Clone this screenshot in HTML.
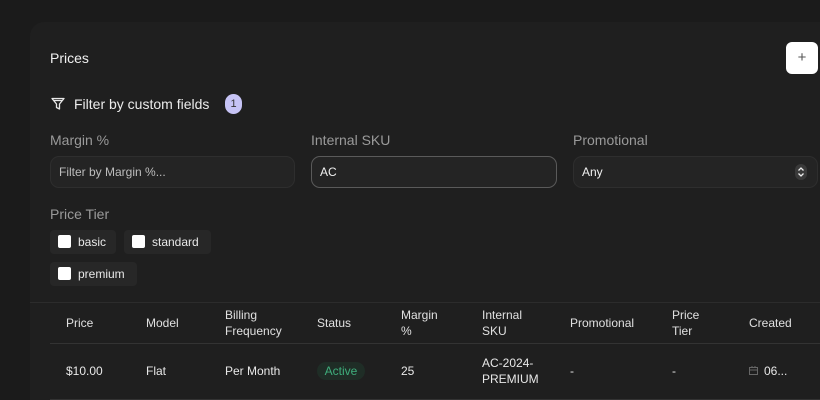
<!DOCTYPE html>
<html style="width:820px;height:400px;overflow:hidden"><head><meta charset="utf-8"><style>
*{box-sizing:border-box;margin:0;padding:0}
body{width:820px;height:400px;overflow:hidden;background:#1b1b1b;font-family:"Liberation Sans",sans-serif;color:#e8e8e8;position:relative}
.card{position:absolute;left:30px;top:22px;width:790px;height:378px;background:#1f1f1f;border-radius:14px 0 0 0}
.a{position:absolute;white-space:nowrap}
.lbl{font-size:14px;color:#9a9a9a}
.inp{position:absolute;top:156px;height:32px;border-radius:9px;background:#242424;border:1px solid #2e2e2e;font-size:12px;padding:0 8px;line-height:30px}
.chip{position:absolute;height:24px;background:#272727;border-radius:4px;font-size:12px;line-height:24px;padding-left:28px;color:#e8e8e8}
.chip:before{content:"";position:absolute;left:8px;top:5px;width:13px;height:13px;background:#fff;border-radius:2px}
.th{position:absolute;font-size:12px;color:#e0e0e0;line-height:16px}
.td{position:absolute;font-size:12px;color:#e8e8e8;line-height:16px}
</style></head><body>
<div class="card"></div>
<div class="a" style="left:50px;top:50px;font-size:14px;color:#f0f0f0">Prices</div>
<div class="a" style="left:786px;top:42px;width:32px;height:32px;background:#fff;border-radius:6px;color:#555;font-size:15px;text-align:center;line-height:31px">+</div>
<svg class="a" style="left:50px;top:96px" width="16" height="16" viewBox="0 0 16 16" fill="none" stroke="#e8e8e8" stroke-width="1.3" stroke-linejoin="round"><path d="M2 2.5h12L9.5 8v5L6.5 11.5V8z"/><path d="M4 4.5h8"/></svg>
<div class="a" style="left:74px;top:96px;font-size:14px;color:#ececec">Filter by custom fields</div>
<div class="a" style="left:225px;top:94px;width:17px;height:20px;border-radius:9px;background:#c6c3f5;color:#333;font-size:11px;text-align:center;line-height:20px">1</div>
<div class="a lbl" style="left:50px;top:132px">Margin %</div>
<div class="a lbl" style="left:311px;top:132px">Internal SKU</div>
<div class="a lbl" style="left:573px;top:132px">Promotional</div>
<div class="inp" style="left:50px;width:245px;color:#bdbdbd">Filter by Margin %...</div>
<div class="inp" style="left:311px;width:246px;border-color:#5a5a5a;color:#f0f0f0">AC</div>
<div class="inp" style="left:573px;width:245px;color:#f0f0f0">Any</div>
<svg class="a" style="left:795px;top:164px" width="12" height="16" viewBox="0 0 12 16"><rect x="0" y="0" width="12" height="16" rx="6" fill="#3a3a3a"/><path d="M3.5 6.5L6 4l2.5 2.5M3.5 9.5L6 12l2.5-2.5" stroke="#eee" stroke-width="1.3" fill="none"/></svg>
<div class="a lbl" style="left:50px;top:206px">Price Tier</div>
<div class="chip" style="left:50px;top:230px;width:66px">basic</div>
<div class="chip" style="left:124px;top:230px;width:87px">standard</div>
<div class="chip" style="left:50px;top:262px;width:87px">premium</div>
<div class="a" style="left:30px;top:302px;width:790px;height:1px;background:#2c2c2c"></div>
<div class="a" style="left:50px;top:343px;width:770px;height:1px;background:#333"></div>
<div class="a" style="left:50px;top:399px;width:770px;height:1px;background:#333"></div>
<div class="th" style="left:66px;top:315px">Price</div>
<div class="th" style="left:146px;top:315px">Model</div>
<div class="th" style="left:225px;top:307px">Billing<br>Frequency</div>
<div class="th" style="left:317px;top:315px">Status</div>
<div class="th" style="left:401px;top:307px">Margin<br>%</div>
<div class="th" style="left:482px;top:307px">Internal<br>SKU</div>
<div class="th" style="left:570px;top:315px">Promotional</div>
<div class="th" style="left:672px;top:307px">Price<br>Tier</div>
<div class="th" style="left:749px;top:315px">Created</div>
<div class="td" style="left:66px;top:363px">$10.00</div>
<div class="td" style="left:146px;top:363px">Flat</div>
<div class="td" style="left:225px;top:363px">Per Month</div>
<div class="a" style="left:317px;top:362px;width:48px;height:18px;border-radius:9px;background:#1f2d26;color:#3fae7c;font-size:12px;line-height:18px;text-align:center">Active</div>
<div class="td" style="left:401px;top:363px">25</div>
<div class="td" style="left:482px;top:355px">AC-2024-<br>PREMIUM</div>
<div class="td" style="left:570px;top:363px">-</div>
<div class="td" style="left:672px;top:363px">-</div>
<svg class="a" style="left:749px;top:366px" width="9" height="9" viewBox="0 0 9 9" fill="none" stroke="#666" stroke-width="1"><rect x="0.5" y="1.5" width="8" height="7"/><path d="M0.5 4h8M3 0v2M6 0v2"/></svg>
<div class="td" style="left:764px;top:363px">06...</div>
</body></html>
